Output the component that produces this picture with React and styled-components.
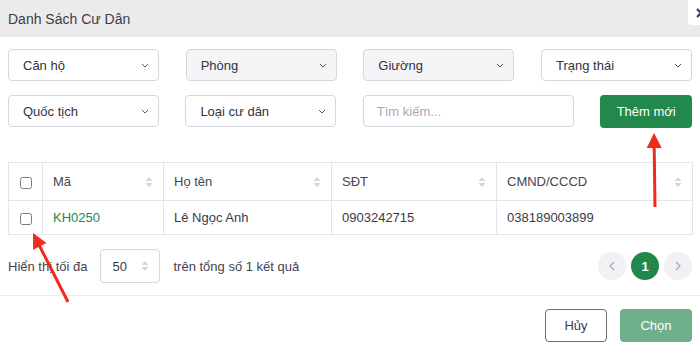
import React from "react";
import styled, { createGlobalStyle } from "styled-components";

const Global = createGlobalStyle`
  html, body { margin: 0; padding: 0; background: #fff; overflow: hidden; }
  body { font-family: "Liberation Sans", Arial, sans-serif; color: #3b3b48; }
  * { box-sizing: border-box; }
`;

const Modal = styled.div`
  position: relative;
  width: 700px;
  height: 356px;
  background: #fff;
`;

const Header = styled.div`
  height: 37px;
  background: #ebebeb;
  display: flex;
  align-items: center;
  padding: 0 8px;
  font-size: 14px;
  color: #3c3c4a;
`;

const Close = styled.div`
  position: absolute;
  top: 0;
  right: -12px;
  width: 24px;
  height: 25px;
  background: #fff;
  border-bottom-left-radius: 4px;
  display: flex;
  align-items: center;
  padding-left: 8px;
  color: #3a3a55;
`;

const Body = styled.div`
  padding: 12px 8px 0;
`;

const FilterGrid = styled.div`
  display: grid;
  grid-template-columns: repeat(4, 151px);
  column-gap: 26.67px;
`;

const SecondRow = styled.div`
  display: grid;
  grid-template-columns: 151px 151px 211px 92px;
  column-gap: 26.4px;
  margin-top: 14px;
  align-items: start;
`;

const Select = styled.div`
  height: 32px;
  border: 1px solid #d6d6df;
  border-radius: 4px;
  background: ${(p) => (p.$disabled ? "#f5f5f7" : "#fff")};
  display: flex;
  align-items: center;
  justify-content: space-between;
  padding: 0 9px 0 14px;
  font-size: 13px;
  color: #333340;
`;

const Search = styled.div`
  height: 32px;
  border: 1px solid #d6d6df;
  border-radius: 4px;
  display: flex;
  align-items: center;
  padding: 0 13px;
  font-size: 13px;
  color: #a8a8b4;
`;

const PrimaryButton = styled.div`
  height: 33px;
  border-radius: 4px;
  background: ${(p) => (p.$muted ? "#6fb08b" : "#23884b")};
  color: #fff;
  font-size: 13px;
  display: flex;
  align-items: center;
  justify-content: center;
  width: ${(p) => p.$w || 92}px;
`;

const OutlineButton = styled.div`
  height: 33px;
  width: 62px;
  border: 1px solid #6a6a72;
  border-radius: 4px;
  color: #3b3b48;
  font-size: 13px;
  display: flex;
  align-items: center;
  justify-content: center;
`;

const Table = styled.table`
  margin-top: 34px;
  width: 684px;
  border-collapse: collapse;
  table-layout: fixed;
  font-size: 13px;
`;

const Th = styled.th`
  height: 38px;
  border: 1px solid #e4e4ec;
  font-weight: normal;
  text-align: left;
  padding: 0 10px;
  color: #45454f;
  width: ${(p) => p.$w}px;
`;

const Td = styled.td`
  height: 34px;
  border: 1px solid #e4e4ec;
  padding: 0 10px;
  color: ${(p) => (p.$link ? "#22874a" : "#3b3b48")};
`;

const HeadInner = styled.div`
  display: flex;
  align-items: center;
  justify-content: space-between;
`;

const Check = styled.span`
  display: inline-block;
  width: 12px;
  height: 12px;
  border: 1px solid #7a7a80;
  border-radius: 2.5px;
  background: #fff;
  vertical-align: middle;
  margin-left: 1px;
`;

const CheckCell = styled(Td)`
  padding: 0 0 0 10px;
`;

const CheckHead = styled(Th)`
  padding: 0 0 0 10px;
`;

const PagerRow = styled.div`
  margin-top: 14px;
  height: 34px;
  display: flex;
  align-items: center;
  font-size: 13px;
  color: #45454f;
`;

const PageSize = styled.div`
  width: 60px;
  height: 34px;
  border: 1px solid #d6d6df;
  border-radius: 4px;
  margin: 0 14px 0 12px;
  display: flex;
  align-items: center;
  justify-content: space-between;
  padding: 0 10px 0 12px;
  color: #3b3b48;
`;

const Pager = styled.div`
  margin-left: auto;
  display: flex;
  gap: 5px;
`;

const PageDot = styled.div`
  width: 28px;
  height: 28px;
  border-radius: 50%;
  background: ${(p) => (p.$active ? "#22874a" : "#f0f0f5")};
  color: ${(p) => (p.$active ? "#fff" : "#a9a9b4")};
  font-weight: bold;
  font-size: 13px;
  display: flex;
  align-items: center;
  justify-content: center;
`;

const Divider = styled.div`
  margin-top: 12px;
  border-top: 1px solid #ececf0;
`;

const Footer = styled.div`
  display: flex;
  justify-content: flex-end;
  gap: 13px;
  padding: 13px 8px 0;
`;

const Overlay = styled.svg`
  position: absolute;
  left: 0;
  top: 0;
  pointer-events: none;
`;

const Chevron = () => (
  <svg width="8" height="5" viewBox="0 0 8 5">
    <path d="M1 1 L4 4 L7 1" fill="none" stroke="#55555f" strokeWidth="1" />
  </svg>
);

const Sort = () => (
  <svg width="8" height="12" viewBox="0 0 8 12">
    <path d="M4 1 L7.5 5 L0.5 5 Z" fill="#d4d4dc" />
    <path d="M4 11 L7.5 7 L0.5 7 Z" fill="#d4d4dc" />
  </svg>
);

const Arrow = ({ x1, y1, x2, y2 }) => {
  const dx = x2 - x1;
  const dy = y2 - y1;
  const len = Math.hypot(dx, dy);
  const ux = dx / len;
  const uy = dy / len;
  const hl = 15;
  const hw = 7.5;
  const bx = x2 - ux * hl;
  const by = y2 - uy * hl;
  const pts = `${x2},${y2} ${bx - uy * hw},${by + ux * hw} ${bx + uy * hw},${by - ux * hw}`;
  return (
    <g>
      <line x1={x1} y1={y1} x2={bx + ux * 2} y2={by + uy * 2} stroke="#ee2b1c" strokeWidth="3" />
      <polygon points={pts} fill="#ee2b1c" />
    </g>
  );
};

const SelectBox = ({ label, disabled }) => (
  <Select $disabled={disabled}>
    <span>{label}</span>
    <Chevron />
  </Select>
);

const cols = [
  { label: "Mã", w: 121 },
  { label: "Họ tên", w: 168 },
  { label: "SĐT", w: 165 },
  { label: "CMND/CCCD", w: 196 },
];

export default function App() {
  return (
    <>
      <Global />
      <Modal>
        <Header>Danh Sách Cư Dân</Header>
        <Close>
          <svg width="10" height="10" viewBox="0 0 10 10">
            <path d="M1 1 L9 9 M9 1 L1 9" stroke="#3a3a55" strokeWidth="2.2" />
          </svg>
        </Close>
        <Body>
          <FilterGrid>
            <SelectBox label="Căn hộ" />
            <SelectBox label="Phòng" disabled />
            <SelectBox label="Giường" disabled />
            <SelectBox label="Trạng thái" />
          </FilterGrid>
          <SecondRow>
            <SelectBox label="Quốc tịch" />
            <SelectBox label="Loại cư dân" />
            <Search>Tìm kiếm...</Search>
            <PrimaryButton>Thêm mới</PrimaryButton>
          </SecondRow>
          <Table>
            <thead>
              <tr>
                <CheckHead $w={34}>
                  <Check />
                </CheckHead>
                {cols.map((c) => (
                  <Th key={c.label} $w={c.w}>
                    <HeadInner>
                      <span>{c.label}</span>
                      <Sort />
                    </HeadInner>
                  </Th>
                ))}
              </tr>
            </thead>
            <tbody>
              <tr>
                <CheckCell>
                  <Check />
                </CheckCell>
                <Td $link>KH0250</Td>
                <Td>Lê Ngọc Anh</Td>
                <Td>0903242715</Td>
                <Td>038189003899</Td>
              </tr>
            </tbody>
          </Table>
          <PagerRow>
            <span>Hiển thị tối đa</span>
            <PageSize>
              <span>50</span>
              <Sort />
            </PageSize>
            <span>trên tổng số 1 kết quả</span>
            <Pager>
              <PageDot>
                <svg width="6" height="10" viewBox="0 0 6 10">
                  <path d="M5 1 L1 5 L5 9" fill="none" stroke="#a9a9b4" strokeWidth="1.2" />
                </svg>
              </PageDot>
              <PageDot $active>1</PageDot>
              <PageDot>
                <svg width="6" height="10" viewBox="0 0 6 10">
                  <path d="M1 1 L5 5 L1 9" fill="none" stroke="#a9a9b4" strokeWidth="1.2" />
                </svg>
              </PageDot>
            </Pager>
          </PagerRow>
        </Body>
        <Divider />
        <Footer>
          <OutlineButton>Hủy</OutlineButton>
          <PrimaryButton $muted $w={72}>Chọn</PrimaryButton>
        </Footer>
        <Overlay width="700" height="356" viewBox="0 0 700 356">
          <Arrow x1={655} y1={207} x2={654} y2={133} />
          <Arrow x1={68} y1={302} x2={33} y2={233} />
        </Overlay>
      </Modal>
    </>
  );
}
